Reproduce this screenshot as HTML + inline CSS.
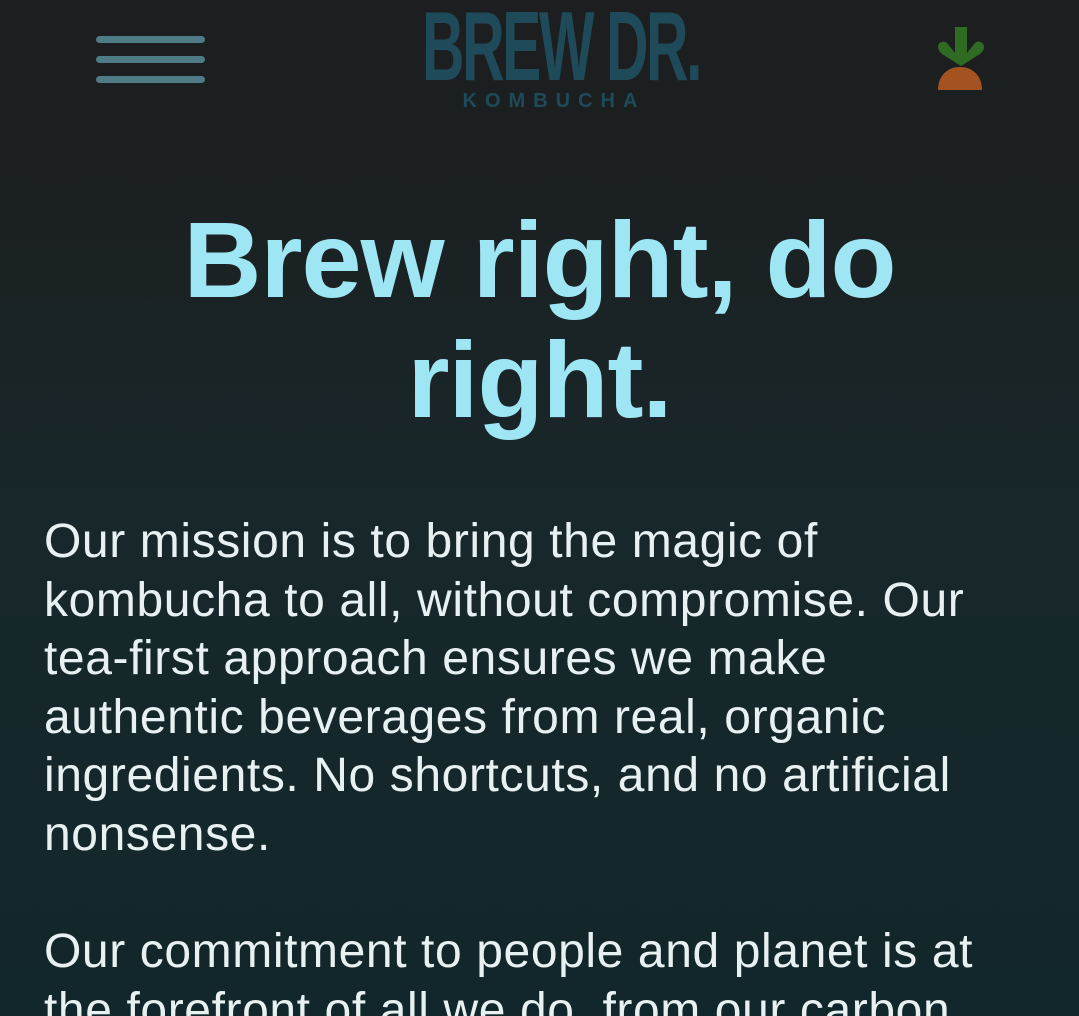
<!DOCTYPE html>
<html><head><style>
html,body{margin:0;padding:0;width:1079px;height:1016px;overflow:hidden}
body{background:linear-gradient(180deg,#1c1e1f 0px,#1c1f20 130px,#18272a 500px,#12272b 1016px);font-family:"Liberation Sans",sans-serif;position:relative}
.hb{position:absolute;left:96px;width:109px;height:7px;border-radius:4px;background:#4f7b86}
.logo{position:absolute;left:416px;top:-3px;width:270px;text-align:center;color:#1e4a5a}
.logo .b{font-weight:bold;font-size:98px;line-height:98px;letter-spacing:-4px;transform:scaleX(0.6);transform-origin:center;white-space:nowrap;display:block;margin-left:-80px;margin-right:-80px}
.logo .k{position:absolute;left:33px;top:93px;width:210px;font-size:20px;font-weight:bold;letter-spacing:8px;text-align:center}
h1{position:absolute;top:200px;left:0;width:1079px;margin:0;text-align:center;color:#9fe6f5;font-size:108px;line-height:120px;font-weight:bold;letter-spacing:-1px}
p{position:absolute;left:44px;width:1030px;margin:0;color:#e8f1f1;font-size:48px;line-height:58.5px;letter-spacing:0.6px;white-space:nowrap}
</style></head><body>
<div class="hb" style="top:36px"></div>
<div class="hb" style="top:56px"></div>
<div class="hb" style="top:76px"></div>
<div class="logo"><span class="b">BREW DR.</span><span class="k">KOMBUCHA</span></div>
<svg style="position:absolute;left:930px;top:24px" width="60" height="70" viewBox="0 0 60 70">
<path d="M25 3h12v26l8-10c3-3 9-1 9 4 0 3-2 5-4 7L31 42 12 30c-2-2-4-4-4-7 0-5 6-7 9-4l8 10z" fill="#2f6b22"/>
<path d="M8 66C8 52 17 43 30 43s22 9 22 23z" fill="#a4521f"/>
</svg>
<h1>Brew right, do<br>right.</h1>
<p style="top:513px">Our mission is to bring the magic of<br>kombucha to all, without compromise. Our<br>tea-first approach ensures we make<br>authentic beverages from real, organic<br>ingredients. No shortcuts, and no artificial<br>nonsense.</p>
<p style="top:923px">Our commitment to people and planet is at<br>the forefront of all we do, from our carbon</p>
</body></html>
